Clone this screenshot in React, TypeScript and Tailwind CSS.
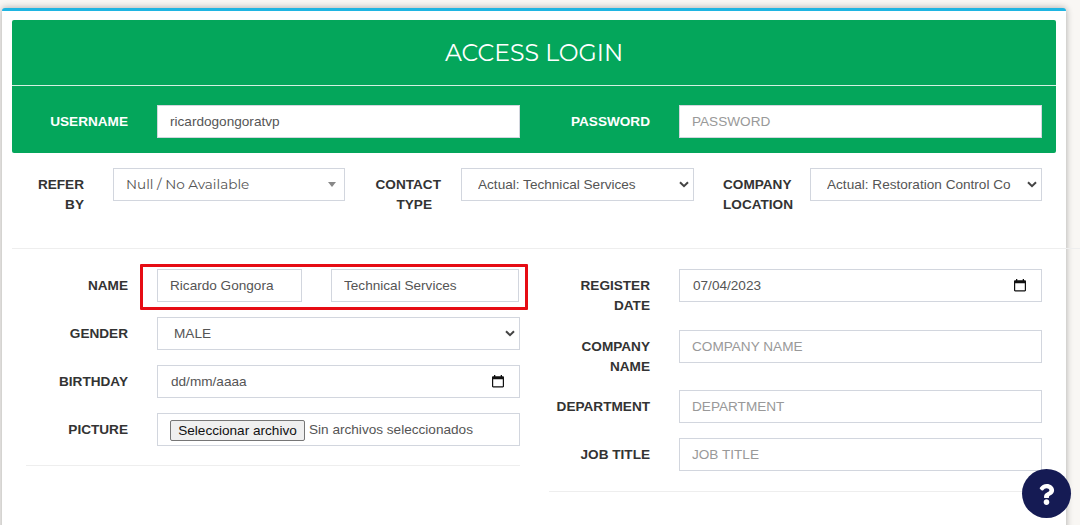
import type { ReactNode } from "react";
import { FaQuestion } from "react-icons/fa";

const box =
  "h-[33px] w-full min-w-0 border border-[#d2d6de] bg-white px-3 text-[13.6px] text-[#555] outline-none placeholder:text-[#999]";

function Label({ children, className = "" }: { children: ReactNode; className?: string }) {
  return (
    <label className={`shrink-0 pt-[7px] text-right text-[13.6px] leading-[19.5px] font-bold text-[#333] ${className}`}>
      {children}
    </label>
  );
}

function Chevron() {
  return (
    <svg className="shrink-0" width="10" height="7" viewBox="0 0 10 7" fill="none" stroke="#444" strokeWidth="2">
      <path d="M1 1.2 5 5.2 9 1.2" />
    </svg>
  );
}

function Calendar() {
  return (
    <svg className="shrink-0" width="12" height="13" viewBox="0 0 12 13" fill="#111">
      <path
        fillRule="evenodd"
        d="M2 0h1.3v1.2h5.4V0H10v1.2h.8c.7 0 1.2.5 1.2 1.2v8.9c0 .7-.5 1.2-1.2 1.2H1.2C.5 12.500 0 12 0 11.300V2.400c0-.7.5-1.2 1.2-1.2H2V0Zm-.8 4.300v7h9.600v-7H1.200Z"
      />
    </svg>
  );
}

function Select({ value }: { value: string }) {
  return (
    <button className={`${box} flex items-center justify-between pl-4 pr-[4px] text-left`}>
      <span className="overflow-hidden pt-px whitespace-nowrap">{value}</span>
      <Chevron />
    </button>
  );
}

function DateBox({ value }: { value: string }) {
  return (
    <div className={`${box} flex items-center justify-between pl-[13px] pr-[15px]`}>
      <span className="pt-px">{value}</span>
      <Calendar />
    </div>
  );
}

export default function App() {
  return (
    <div className="relative h-[525px] w-[1080px] overflow-hidden bg-[#f9f7f4] pt-2 pl-[2px] font-['Liberation_Sans',Arial,sans-serif]">
      <main className="h-[530px] w-[1064px] rounded-t-[3px] border-t-[3px] border-[#1fb5e2] bg-white pt-[9px] pl-[10px] shadow-[0_0_7px_rgba(0,0,0,0.32)]">
        <section className="h-[133px] w-[1044px] rounded-[2px] bg-[#04a65b]">
          <h1 className="flex h-[66px] items-center justify-center border-b border-[#d5f0e2] font-['Montserrat','Lato',sans-serif] text-[23.6px] text-white">
            ACCESS LOGIN
          </h1>
          <div className="flex pt-[19px]">
            <Label className="w-[116px] text-white!">USERNAME</Label>
            <div className="ml-[29px] w-[363px]">
              <input className={box} defaultValue="ricardogongoratvp" />
            </div>
            <Label className="w-[130px] text-white!">PASSWORD</Label>
            <div className="ml-[29px] w-[363px]">
              <input className={box} placeholder="PASSWORD" />
            </div>
          </div>
        </section>

        <section className="flex h-[96px] w-[1068px] border-b border-[#eee] pt-[15px]">
          <Label className="w-[72px]">REFER<br />BY</Label>
          <div className="ml-[29px] w-[232px]">
            <button className={`${box} flex items-center justify-between pr-[8px] font-['Montserrat','Inter',sans-serif] text-[#555]!`}>
              <span>Null / No Available</span>
              <svg width="8" height="5" viewBox="0 0 8 5" fill="#888">
                <path d="M0 0h8L4 5Z" />
              </svg>
            </button>
          </div>
          <Label className="w-[96px]">CONTACT<br /><span className="pr-[9px]">TYPE</span></Label>
          <div className="ml-[20px] w-[233px]">
            <Select value="Actual: Technical Services" />
          </div>
          <Label className="ml-[29px] w-[71px] text-left!">COMPANY<br />LOCATION</Label>
          <div className="ml-[16px] w-[232px]">
            <Select value="Actual: Restoration Control Co" />
          </div>
        </section>

        <div className="flex pt-5">
          <section className="ml-[14px] flex h-[197px] w-[494px] flex-col gap-[15px] border-b border-[#eee]">
            <div className="flex">
              <Label className="w-[102px]">NAME</Label>
              <div className="relative ml-[29px] flex w-[362px] gap-[29px]">
                <div className="w-[145px]">
                  <input className={box} defaultValue="Ricardo Gongora" />
                </div>
                <div className="w-[188px]">
                  <input className={box} defaultValue="Technical Services" />
                </div>
                <span className="pointer-events-none absolute -top-[5px] -left-[17px] h-[46px] w-[388px] rounded-[1px] border-[3px] border-[#e60c14]" />
              </div>
            </div>
            <div className="flex">
              <Label className="w-[102px]">GENDER</Label>
              <div className="ml-[29px] w-[363px]"><Select value="MALE" /></div>
            </div>
            <div className="flex">
              <Label className="w-[102px]">BIRTHDAY</Label>
              <div className="ml-[29px] w-[363px]"><DateBox value="dd/mm/aaaa" /></div>
            </div>
            <div className="flex">
              <Label className="w-[102px]">PICTURE</Label>
              <div className="ml-[29px] w-[363px]">
                <div className={`${box} flex items-center gap-1 pt-px`}>
                  <button className="h-[21px] w-[135px] rounded-[2px] border border-[#767676] bg-[#efefef] text-[13.6px] leading-[19px] whitespace-nowrap text-[#111]">
                    Seleccionar archivo
                  </button>
                  <span className="pt-px">Sin archivos seleccionados</span>
                </div>
              </div>
            </div>
          </section>

          <section className="ml-[29px] flex h-[223px] w-[493px] flex-col border-b border-[#eee]">
            <div className="flex h-[61px]">
              <Label className="w-[101px]">REGISTER<br />DATE</Label>
              <div className="ml-[29px] w-[363px]"><DateBox value="07/04/2023" /></div>
            </div>
            <div className="flex h-[60px]">
              <Label className="w-[101px]">COMPANY<br />NAME</Label>
              <div className="ml-[29px] w-[363px]"><input className={box} placeholder="COMPANY NAME" /></div>
            </div>
            <div className="flex h-[48px]">
              <Label className="w-[101px]">DEPARTMENT</Label>
              <div className="ml-[29px] w-[363px]"><input className={box} placeholder="DEPARTMENT" /></div>
            </div>
            <div className="flex">
              <Label className="w-[101px]">JOB TITLE</Label>
              <div className="ml-[29px] w-[363px]"><input className={box} placeholder="JOB TITLE" /></div>
            </div>
          </section>
        </div>
      </main>
      <button className="absolute top-[469px] left-[1022px] flex size-[49px] items-center justify-center rounded-full bg-[#151b54] pt-px text-white">
        <FaQuestion size={21} />
      </button>
    </div>
  );
}
